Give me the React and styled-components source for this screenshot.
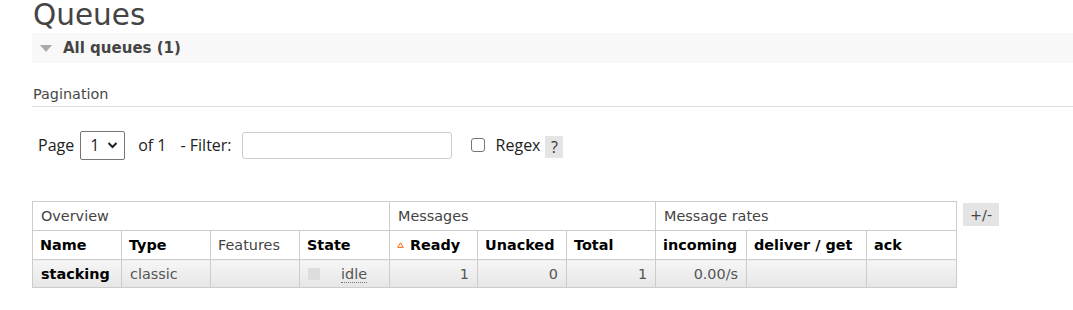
import React from "react";
import styled, { createGlobalStyle } from "styled-components";

const Global = createGlobalStyle`
  html, body { margin: 0; padding: 0; background: #fff; }
  body { font-family: "DejaVu Sans", Verdana, sans-serif; font-size: 14.4px; color: #484848; }
`;

const Page = styled.div`
  padding-left: 32px;
`;

const Title = styled.h1`
  margin: 0 0 3px 1px;
  font-weight: normal;
  font-size: 29.5px;
  line-height: 30px;
  color: #444;
`;

const Band = styled.div`
  display: flex;
  align-items: center;
  height: 30px;
  background: #f8f8f8;
  gap: 11px;
  padding-left: 8px;
`;

const Arrow = styled.span`
  width: 0;
  height: 0;
  border-left: 6.5px solid transparent;
  border-right: 6.5px solid transparent;
  border-top: 7px solid #aaa;
  margin-top: 1px;
`;

const BandTitle = styled.span`
  font-weight: bold;
  font-size: 15px;
  color: #444;
`;

const SubHead = styled.div`
  margin-top: 19px;
  padding-top: 1px;
  height: 23px;
  line-height: 23px;
  border-bottom: 1px solid #ddd;
  color: #484848;
  padding-left: 1px;
`;

const PagerRow = styled.div`
  display: flex;
  align-items: center;
  margin-top: 23px;
  height: 30px;
  padding-left: 6px;
  font-family: "Open Sans", "Noto Sans", sans-serif;
  font-size: 16px;
  color: #222;
`;

const Label = styled.span`
  margin-right: ${(p) => p.$mr || 0}px;
`;

const SelectBox = styled.div`
  box-sizing: border-box;
  width: 45px;
  height: 29px;
  border: 1px solid #767676;
  border-radius: 2px;
  display: flex;
  align-items: center;
  padding-left: 9px;
  gap: 8px;
  margin-right: 13px;
  font-size: 16px;
`;

const Input = styled.div`
  box-sizing: border-box;
  width: 210px;
  height: 27px;
  border: 1px solid #ccc;
  border-radius: 3px;
  margin-left: 10px;
  margin-right: 19px;
`;

const Check = styled.span`
  box-sizing: border-box;
  width: 14px;
  height: 14px;
  border: 1px solid #767676;
  border-radius: 3px;
  margin-right: 11px;
`;

const Help = styled.span`
  display: inline-flex;
  align-items: center;
  justify-content: center;
  width: 18px;
  height: 22px;
  background: #e4e4e4;
  margin-left: 5px;
  margin-top: 4px;
  color: #333;
`;

const TableWrap = styled.div`
  display: flex;
  align-items: flex-start;
  margin-top: 41px;
  gap: 6px;
`;

const Table = styled.table`
  border-collapse: collapse;
  table-layout: fixed;
  width: 924px;
  font-size: 14.4px;
`;

const Col = styled.col`
  width: ${(p) => p.$w}px;
`;

const GroupTh = styled.th`
  border: 1px solid #ccc;
  height: 28px;
  padding: 0 8px;
  text-align: left;
  font-weight: normal;
  color: #444;
  white-space: nowrap;
`;

const Th = styled.th`
  border: 1px solid #ccc;
  height: 28px;
  padding: 0 7px;
  text-align: left;
  font-weight: ${(p) => (p.$light ? "normal" : "bold")};
  color: ${(p) => (p.$light ? "#444" : "#000")};
  white-space: nowrap;
`;

const SortIcon = styled.svg`
  margin-right: 6px;
  vertical-align: 2px;
`;

const Td = styled.td`
  border: 1px solid #ccc;
  height: 27px;
  padding: 0 8px;
  background: linear-gradient(#f6f6f6, #e6e6e6);
  text-align: ${(p) => (p.$num ? "right" : "left")};
  font-weight: ${(p) => (p.$bold ? "bold" : "normal")};
  color: ${(p) => (p.$bold ? "#000" : "#555")};
  white-space: nowrap;
`;

const StateBox = styled.span`
  display: inline-block;
  width: 12px;
  height: 12px;
  background: #ddd;
  vertical-align: -1px;
  margin-right: 21px;
`;

const Abbr = styled.abbr`
  text-decoration: none;
  border-bottom: 1px dotted #777;
  color: #555;
`;

const Toggle = styled.span`
  display: inline-flex;
  align-items: center;
  justify-content: center;
  width: 36px;
  height: 23px;
  margin-top: 2px;
  background: #e4e4e4;
  color: #444;
  font-size: 14.4px;
`;

const Chevron = () => (
  <svg width="11" height="8" viewBox="0 0 11 8">
    <path d="M1.5 2 L5.5 6 L9.5 2" fill="none" stroke="#222" strokeWidth="2" />
  </svg>
);

const SortMark = () => (
  <SortIcon width="7" height="6" viewBox="0 0 7 6">
    <path d="M3.5 0.8 L6.3 5.4 L0.7 5.4 Z" fill="#fff" stroke="#f60" strokeWidth="1" />
  </SortIcon>
);

export default function App() {
  return (
    <>
      <Global />
      <Page>
        <Title>Queues</Title>
        <Band>
          <Arrow />
          <BandTitle>All queues (1)</BandTitle>
        </Band>
        <SubHead>Pagination</SubHead>
        <PagerRow>
          <Label $mr={6}>Page</Label>
          <SelectBox>
            <span>1</span>
            <Chevron />
          </SelectBox>
          <Label $mr={14}>of 1</Label>
          <Label>- Filter:</Label>
          <Input />
          <Check />
          <Label>Regex</Label>
          <Help>?</Help>
        </PagerRow>
        <TableWrap>
          <Table>
            <colgroup>
              <Col $w={89} />
              <Col $w={89} />
              <Col $w={89} />
              <Col $w={90} />
              <Col $w={88} />
              <Col $w={89} />
              <Col $w={89} />
              <Col $w={91} />
              <Col $w={120} />
              <Col $w={90} />
            </colgroup>
            <thead>
              <tr>
                <GroupTh colSpan={4}>Overview</GroupTh>
                <GroupTh colSpan={3}>Messages</GroupTh>
                <GroupTh colSpan={3}>Message rates</GroupTh>
              </tr>
              <tr>
                <Th>Name</Th>
                <Th>Type</Th>
                <Th $light>Features</Th>
                <Th>State</Th>
                <Th>
                  <SortMark />
                  Ready
                </Th>
                <Th>Unacked</Th>
                <Th>Total</Th>
                <Th>incoming</Th>
                <Th>deliver / get</Th>
                <Th>ack</Th>
              </tr>
            </thead>
            <tbody>
              <tr>
                <Td $bold>stacking</Td>
                <Td>classic</Td>
                <Td />
                <Td>
                  <StateBox />
                  <Abbr>idle</Abbr>
                </Td>
                <Td $num>1</Td>
                <Td $num>0</Td>
                <Td $num>1</Td>
                <Td $num>0.00/s</Td>
                <Td />
                <Td />
              </tr>
            </tbody>
          </Table>
          <Toggle>+/-</Toggle>
        </TableWrap>
      </Page>
    </>
  );
}
